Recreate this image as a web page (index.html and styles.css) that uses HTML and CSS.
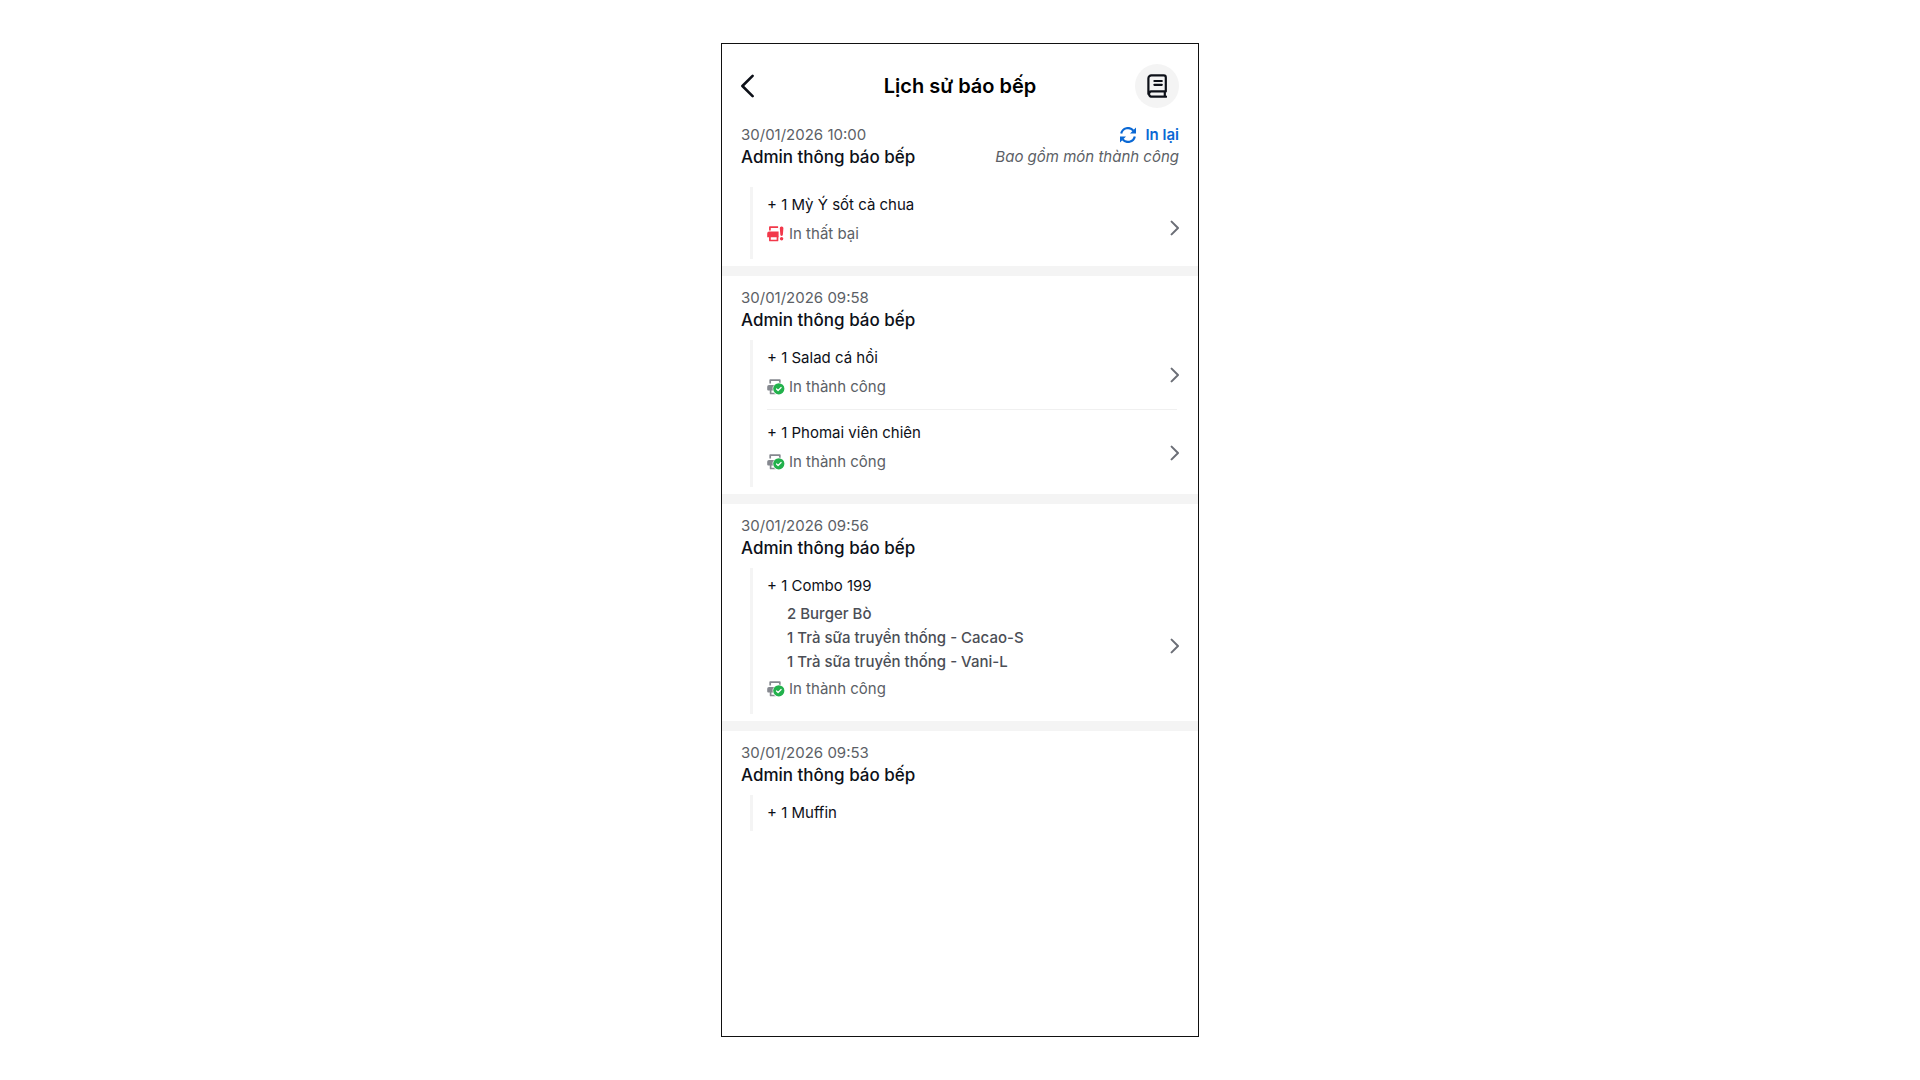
FILE: index.html
```html
<!DOCTYPE html>
<html lang="vi">
<head>
<meta charset="utf-8">
<meta name="viewport" content="width=device-width, initial-scale=1">
<title>Lịch sử báo bếp</title>
<link rel="stylesheet" href="styles.css">
</head>
<body>
<svg class="sprite" aria-hidden="true">
  <symbol id="chevron" viewBox="0 0 10 16"><path d="M2.6 1.6L9 8l-6.4 6.4" fill="none" stroke="#6b6e76" stroke-width="2" stroke-linecap="round" stroke-linejoin="round"/></symbol>
  <symbol id="printed" viewBox="0 0 18 16">
    <path d="M3.2 4.6V1.1h9.6v3.5" fill="none" stroke="#85888f" stroke-width="1.7" stroke-linejoin="round"/>
    <path d="M2 6h12v5.4H1.2a1 1 0 0 1-1-1V7.8A1.8 1.8 0 0 1 2 6z" fill="#85888f"/>
    <path d="M3.6 10.5v4h5" fill="none" stroke="#85888f" stroke-width="1.7" stroke-linejoin="round"/>
    <circle cx="11.8" cy="9.8" r="6.2" fill="#fff"/>
    <circle cx="11.8" cy="9.8" r="5.6" fill="#22b14c"/>
    <path d="M9.5 10l1.6 1.5 3-3" fill="none" stroke="#fff" stroke-width="1.2" stroke-linecap="round" stroke-linejoin="round"/>
  </symbol>
  <symbol id="failed" viewBox="0 0 18 16">
    <path d="M2.9 4.4V1.1h8.2M2.9 10.5v4h7.6v-4" fill="none" stroke="#f2384a" stroke-width="1.7" stroke-linejoin="round"/>
    <path d="M2.2 5.4h9.4v5.8H.2V7.4a2 2 0 0 1 2-2z" fill="#f2384a"/>
    <path d="M12.8 2a1.6 1.6 0 0 1 1.6-1.6h.4A1.6 1.6 0 0 1 16.4 2l-.5 6.6a1.3 1.3 0 0 1-2.6 0z" fill="#f2384a"/>
    <circle cx="14.6" cy="12.8" r="1.7" fill="#f2384a"/>
  </symbol>
</svg>

<main class="screen">
  <header class="topbar">
    <button class="back" type="button" aria-label="Quay lại">
      <svg width="14" height="24" viewBox="0 0 14 24"><path d="M11.6 1.8L1.4 12l10.2 10.2" fill="none" stroke="#0d1018" stroke-width="2.6" stroke-linecap="round" stroke-linejoin="round"/></svg>
    </button>
    <h1 class="title">Lịch sử báo bếp</h1>
    <button class="book" type="button" aria-label="Sổ ghi">
      <svg width="20" height="24" viewBox="0 0 20 24" fill="none" stroke="#0d1018" stroke-width="2.2" stroke-linecap="round" stroke-linejoin="round"><path d="M18.8 17.4H4a2.7 2.7 0 0 0 0 5.2h15M1.4 20V4.4a3 3 0 0 1 3-3h12.4a2 2 0 0 1 2 2v14M17.8 18v4M7.4 7h7.4M7.4 10.8h7.4"/></svg>
    </button>
  </header>

  <section class="entry entry-latest">
    <div class="entry-head">
      <div class="who">
        <time class="date" datetime="2026-01-30T10:00">30/01/2026 10:00</time>
        <h2 class="name">Admin thông báo bếp</h2>
      </div>
      <div class="reprint-box">
        <button class="reprint" type="button">
          <svg width="16" height="16" viewBox="0 0 16 16"><path d="M1.2 6.6A7 7 0 0 1 13.4 3.6M14.8 9.4A7 7 0 0 1 2.6 12.4" fill="none" stroke="#0a68d4" stroke-width="2.2"/><path d="M16 .4v6H10zM0 15.6v-6h6z" fill="#0a68d4"/></svg>
          In lại
        </button>
        <em class="note">Bao gồm món thành công</em>
      </div>
    </div>
    <ul class="items">
      <li class="item">
        <div class="dish">
          <p class="dish-name">+ 1 Mỳ Ý sốt cà chua</p>
          <p class="status"><svg width="18" height="16"><use href="#failed"/></svg>In thất bại</p>
        </div>
        <button class="open" type="button" aria-label="Xem chi tiết"><svg width="10" height="16"><use href="#chevron"/></svg></button>
      </li>
    </ul>
  </section>

  <section class="entry">
    <div class="who">
      <time class="date" datetime="2026-01-30T09:58">30/01/2026 09:58</time>
      <h2 class="name">Admin thông báo bếp</h2>
    </div>
    <ul class="items">
      <li class="item">
        <div class="dish">
          <p class="dish-name">+ 1 Salad cá hồi</p>
          <p class="status"><svg width="18" height="16"><use href="#printed"/></svg>In thành công</p>
        </div>
        <button class="open" type="button" aria-label="Xem chi tiết"><svg width="10" height="16"><use href="#chevron"/></svg></button>
      </li>
      <li class="item">
        <div class="dish">
          <p class="dish-name">+ 1 Phomai viên chiên</p>
          <p class="status"><svg width="18" height="16"><use href="#printed"/></svg>In thành công</p>
        </div>
        <button class="open" type="button" aria-label="Xem chi tiết"><svg width="10" height="16"><use href="#chevron"/></svg></button>
      </li>
    </ul>
  </section>

  <section class="entry">
    <div class="who">
      <time class="date" datetime="2026-01-30T09:56">30/01/2026 09:56</time>
      <h2 class="name">Admin thông báo bếp</h2>
    </div>
    <ul class="items">
      <li class="item">
        <div class="dish dish-combo">
          <p class="dish-name">+ 1 Combo 199</p>
          <ul class="parts">
            <li>2 Burger Bò</li>
            <li>1 Trà sữa truyền thống - Cacao-S</li>
            <li>1 Trà sữa truyền thống - Vani-L</li>
          </ul>
          <p class="status"><svg width="18" height="16"><use href="#printed"/></svg>In thành công</p>
        </div>
        <button class="open" type="button" aria-label="Xem chi tiết"><svg width="10" height="16"><use href="#chevron"/></svg></button>
      </li>
    </ul>
  </section>

  <section class="entry">
    <div class="who">
      <time class="date" datetime="2026-01-30T09:53">30/01/2026 09:53</time>
      <h2 class="name">Admin thông báo bếp</h2>
    </div>
    <ul class="items">
      <li class="item">
        <div class="dish dish-plain">
          <p class="dish-name">+ 1 Muffin</p>
        </div>
      </li>
    </ul>
  </section>
</main>
</body>
</html>
```
FILE: styles.css
```css
* {
  box-sizing: border-box;
}

body {
  margin: 0;
  padding: 43px 16px;
  background: #fff;
  color: #0d1018;
  font-family: Inter, "Noto Sans", sans-serif;
  font-size: 15px;
  line-height: 18px;
}

h1, h2, p, ul {
  margin: 0;
  padding: 0;
}

ul {
  list-style: none;
}

button {
  padding: 0;
  border: 0;
  background: none;
  color: inherit;
  font: inherit;
  cursor: pointer;
}

svg {
  display: block;
  flex: none;
}

.sprite {
  position: absolute;
  width: 0;
  height: 0;
}

.screen {
  max-width: 478px;
  min-height: calc(100vh - 86px);
  margin: 0 auto;
  border: 1px solid #111;
}

.topbar {
  display: grid;
  grid-template-columns: 44px 1fr 44px;
  align-items: center;
  padding: 20px 19px 0;
}

.title {
  color: #000;
  font-size: 20px;
  font-weight: 600;
  line-height: 28px;
  text-align: center;
}

.back {
  justify-self: start;
}

.book {
  display: grid;
  place-items: center;
  width: 44px;
  height: 44px;
  border-radius: 50%;
  background: #f4f4f4;
}

.entry {
  padding: 11px 19px 7px;
}

.entry + .entry {
  border-top: 10px solid #f4f4f4;
}

.entry-latest {
  padding-top: 16px;
}

.entry-latest .items {
  margin-top: 19px;
}

.entry-head {
  display: flex;
  justify-content: space-between;
}

.date {
  display: block;
  color: #5c5f66;
  line-height: 22px;
}

.name {
  font-size: 17px;
  font-weight: 500;
  line-height: 22px;
}

.reprint-box {
  display: flex;
  flex-direction: column;
  align-items: flex-end;
}

.reprint {
  display: flex;
  align-items: center;
  gap: 9px;
  color: #0a68d4;
  font-weight: 600;
  line-height: 22px;
}

.note {
  color: #5c5f66;
  line-height: 22px;
}

.items {
  margin: 9px 0 0 9px;
  padding: 9px 0 0 14px;
  border-left: 3px solid #f4f4f4;
}

.item {
  display: flex;
  align-items: center;
  justify-content: space-between;
  margin-right: 2px;
}

.item + .item {
  margin-top: 8px;
  padding-top: 8px;
  border-top: 1px solid #f0f0f0;
}

.dish {
  display: grid;
  gap: 11px;
  padding-bottom: 16px;
}

.dish-combo {
  gap: 6px;
}

.item:not(:last-child) .dish {
  padding-bottom: 5px;
}

.item + .item .dish {
  padding-top: 6px;
}

.dish-plain {
  padding-bottom: 9px;
}

.status {
  display: flex;
  align-items: center;
  gap: 4px;
  color: #5c5f66;
}

.parts {
  padding: 1px 0 0 20px;
  color: #4b4e56;
  font-weight: 500;
  line-height: 24px;
}

.open {
  margin-right: -2px;
}
```
